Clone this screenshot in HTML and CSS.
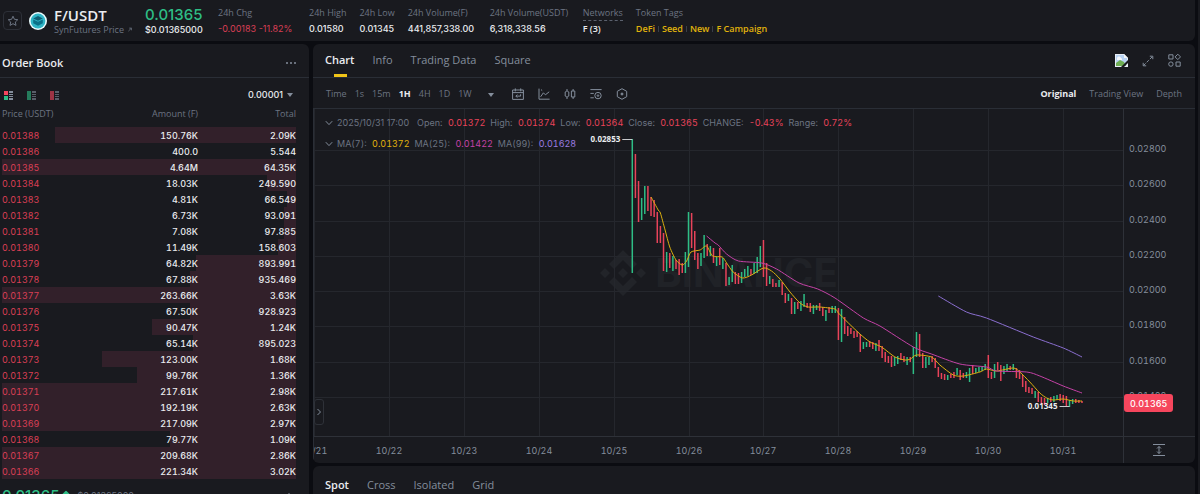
FILE: index.html
```html
<!DOCTYPE html>
<html lang="en">
<head>
    <meta charset="UTF-8">
    <meta name="viewport" content="width=device-width, initial-scale=1.0">
    <title>F/USDT | Spot</title>
    <link rel="stylesheet" href="styles.css">
</head>
<body>
    <div class="page">
        <div class="workspace">
            <header class="ticker">
                <button class="star" aria-label="Add to favorites">
                    <svg viewBox="0 0 12 12" width="12" height="12"><path d="M6 1.2l1.4 3.1 3.4.4-2.5 2.3.7 3.4L6 8.7l-3 1.7.7-3.4L1.2 4.7l3.4-.4z"/></svg>
                </button>
                <svg class="coin" viewBox="0 0 18 18" width="18" height="18">
                    <circle cx="9" cy="9" r="9" fill="#e9fbfd"/>
                    <circle cx="9" cy="9" r="7.4" fill="#2fb5c6"/>
                    <path d="M9 4l4.8 2.4L9 8.8 4.2 6.4z" fill="#0d5f74"/>
                    <path d="M4.2 7.4L9 9.8l4.8-2.4v3.8L9 13.8l-4.8-2.6z" fill="#0a7188"/>
                </svg>
                <div class="pair">
                    <h1>F/USDT</h1>
                    <a href="#">SynFutures Price <svg viewBox="0 0 5 5" width="5" height="5"><path d="M.5 4.5l3.6-3.6M1.5.8h2.7v2.7"/></svg></a>
                </div>
                <div class="last">
                    <div class="last-price num">0.01365</div>
                    <div class="value num">$0.01365000</div>
                </div>
                <div class="stat change"><div class="label">24h Chg</div><div class="value num down">-0.00183 -11.82%</div></div>
                <div class="stat"><div class="label">24h High</div><div class="value num">0.01580</div></div>
                <div class="stat"><div class="label">24h Low</div><div class="value num">0.01345</div></div>
                <div class="stat volume"><div class="label">24h Volume(F)</div><div class="value num">441,857,338.00</div></div>
                <div class="stat volume-quote"><div class="label">24h Volume(USDT)</div><div class="value num">6,318,338.56</div></div>
                <div class="stat"><div class="label"><span class="dashed">Networks</span></div><div class="value">F (3)</div></div>
                <div class="stat">
                    <div class="label">Token Tags</div>
                    <div class="value tags"><a href="#">DeFi</a><a href="#">Seed</a><a href="#">New</a><a href="#">F Campaign</a></div>
                </div>
            </header>

            <main class="panels">
                <section class="order-book">
                    <div class="panel-head">
                        <h2>Order Book</h2>
                        <button class="more" aria-label="More"><i></i><i></i><i></i></button>
                    </div>
                    <div class="book-tools">
                        <button aria-label="Order book">
                            <svg viewBox="0 0 10 9" width="10" height="9"><path fill="#f6465d" d="M0 0h4v4H0z"/><path fill="#2ebd85" d="M0 5h4v4H0z"/><path fill="#848e9c" d="M5 0h4v2H5zM5 3h4v1H5zM5 5h4v1H5zM5 7h4v2H5z"/></svg>
                        </button>
                        <button class="dim" aria-label="Buy order">
                            <svg viewBox="0 0 10 9" width="10" height="9"><path fill="#2ebd85" d="M0 0h4v9H0z"/><path fill="#848e9c" d="M5 0h4v2H5zM5 3h4v1H5zM5 5h4v1H5zM5 7h4v2H5z"/></svg>
                        </button>
                        <button class="dim" aria-label="Sell order">
                            <svg viewBox="0 0 10 9" width="10" height="9"><path fill="#f6465d" d="M0 0h4v9H0z"/><path fill="#848e9c" d="M5 0h4v2H5zM5 3h4v1H5zM5 5h4v1H5zM5 7h4v2H5z"/></svg>
                        </button>
                        <button class="tick-size num">0.00001<span class="caret"></span></button>
                    </div>
                    <table>
                        <thead>
                            <tr><th>Price (USDT)</th><th>Amount (F)</th><th>Total</th></tr>
                        </thead>
                        <tbody id="asks" class="num tabular"></tbody>
                    </table>
                    <div class="book-last">
                        <span class="book-price num">0.01365<svg viewBox="0 0 10 12" width="10" height="12"><path d="M5 11V1.5M1.5 5L5 1.5 8.500 5"/></svg></span>
                        <span class="book-mark num">$0.01365000</span>
                        <svg class="chev" viewBox="0 0 6 8" width="6" height="8"><path d="M1.500 1l3 3-3 3"/></svg>
                    </div>
                </section>

                <div class="right-side">
                    <section class="chart-panel">
                        <div class="tabs">
                            <button class="active">Chart</button>
                            <button>Info</button>
                            <button>Trading Data</button>
                            <button>Square</button>
                            <div class="tab-icons">
                                <svg viewBox="0 0 13 13" width="13" height="13">
                                    <path fill="#e8eef6" d="M0 0h9l4 4v9H0z"/>
                                    <path fill="#b9d3f3" d="M1 1h8v3h3v5H1z"/>
                                    <path fill="#f6f9fd" d="M2 5a2 2 0 0 1 4-1 1.500 1.500 0 0 1 1 2H2z"/>
                                    <path fill="#6fae54" d="M1 12V9l4-3 4 2 2 4z"/>
                                    <path fill="#f4f6f8" d="M9 0l4 4H9z"/>
                                    <path fill="#191a1f" d="M13 6v3l-4 4H6z"/>
                                    <path fill="#e8eef6" d="M13 10v3h-3z"/>
                                </svg>
                                <svg class="line" viewBox="0 0 12 12" width="12" height="12"><path stroke-dasharray="3 1.500" d="M1.500 10.500l9-9"/><path d="M7.800 1.200h3v3M1.200 7.800v3h3"/></svg>
                                <svg class="line" viewBox="0 0 13 13" width="13" height="13"><path d="M.8.8h4.200V5H.8zM9.800.2l2.700 2.700-2.700 2.700-2.700-2.700zM8 8h4.200v4.200H8z"/><circle cx="2.900" cy="10.100" r="2.200"/></svg>
                            </div>
                        </div>
                        <div class="toolbar">
                            <div class="intervals">
                                <button>Time</button>
                                <button>1s</button>
                                <button>15m</button>
                                <button class="active">1H</button>
                                <button>4H</button>
                                <button>1D</button>
                                <button>1W</button>
                                <button aria-label="More intervals"><span class="caret"></span></button>
                            </div>
                            <div class="tools">
                                <svg viewBox="0 0 12 12" width="12" height="12"><path d="M.6 2h10.800v9.400H.6zM.6 4.600h10.800M3.300.4v3M8.700.4v3M8.600 6.300v1.800H4M5.300 6.600L3.800 8.100l1.500 1.500"/></svg>
                                <svg viewBox="0 0 12 12" width="12" height="12"><path d="M1 .6v10.600h10.600M2.600 8.800l2.800-4 2 2 3.800-3M3 1.600l1.200 1"/></svg>
                                <svg viewBox="0 0 12 12" width="12" height="12"><path d="M1.200 4L3 2.800 4.800 4v4L3 9.200 1.200 8zM3 1v1.800M3 9.200V11M7.400 3h3.400v6H7.400zM9.100 1v2M9.100 9v2"/></svg>
                                <svg viewBox="0 0 12 12" width="12" height="12"><path d="M.4 1.600h11.200M.4 5.400h3.400M.4 9.800h3.400"/><circle cx="8" cy="7.600" r="3.200"/><circle cx="8" cy="7.600" r=".8"/></svg>
                                <svg viewBox="0 0 12 12" width="12" height="12"><path d="M6 .7l4.700 2.600v5.400L6 11.300 1.300 8.700V3.300z"/><circle cx="6" cy="6" r="1" fill="currentColor"/></svg>
                            </div>
                            <div class="views">
                                <button class="active">Original</button>
                                <button>Trading View</button>
                                <button>Depth</button>
                            </div>
                        </div>
                        <div class="chart">
                            <div class="watermark">
                                <svg viewBox="0 0 48 48" width="48" height="48"><path d="M24 1l14 14-5 5-9-9-9 9-5-5zM6 19l5 5-5 5-5-5zM24 19l5 5-5 5-5-5zM42 19l5 5-5 5-5-5zM24 47L10 33l5-5 9 9 9-9 5 5z"/></svg>
                                <span>BINANCE</span>
                            </div>
                            <svg id="chart-svg" class="chart-svg num tabular"></svg>
                            <div class="legend num tabular">
                                <div class="legend-row">
                                    <svg viewBox="0 0 8 6" width="8" height="6"><path d="M.8 1.200L4 4.600l3.200-3.400"/></svg>
                                    <span class="legend-time">2025/10/31 17:00</span>
                                    <span>Open: <b>0.01372</b></span>
                                    <span>High: <b>0.01374</b></span>
                                    <span>Low: <b>0.01364</b></span>
                                    <span>Close: <b>0.01365</b></span>
                                    <span>CHANGE: <b>-0.43%</b></span>
                                    <span>Range: <b>0.72%</b></span>
                                </div>
                                <div class="legend-row">
                                    <svg viewBox="0 0 8 6" width="8" height="6"><path d="M.8 1.200L4 4.600l3.200-3.400"/></svg>
                                    <span>MA(7): <b class="ma7">0.01372</b></span>
                                    <span>MA(25): <b class="ma25">0.01422</b></span>
                                    <span>MA(99): <b class="ma99">0.01628</b></span>
                                </div>
                            </div>
                            <button class="handle" aria-label="Show drawing tools"><svg viewBox="0 0 6 8" width="6" height="8"><path d="M1.500 1l3 3-3 3"/></svg></button>
                        </div>
                    </section>

                    <section class="trade-panel">
                        <div class="tabs">
                            <button class="active">Spot</button>
                            <button>Cross</button>
                            <button>Isolated</button>
                            <button>Grid</button>
                        </div>
                    </section>
                </div>
            </main>
        </div>
        <aside class="market-list"></aside>
    </div>

    <script src="chart.js"></script>
</body>
</html>
```

FILE: styles.css
```css
* {
    box-sizing: border-box;
}

body {
    margin: 0;
    height: 100vh;
    overflow: hidden;
    background-color: #0b0c11;
    color: #eaecef;
    font-family: "Open Sans", "Noto Sans", sans-serif;
    font-size: 9px;
    line-height: 16px;
}

button {
    padding: 0;
    border: none;
    background: none;
    color: inherit;
    font: inherit;
    cursor: pointer;
}

a {
    color: inherit;
    text-decoration: none;
}

h1, h2 {
    margin: 0;
}

svg {
    display: block;
    fill: none;
    stroke-linejoin: round;
}

.num {
    font-family: Inter, "Open Sans", sans-serif;
}

.tabular {
    font-variant-numeric: tabular-nums;
}

.page {
    display: grid;
    grid-template-columns: 1fr 2px;
    gap: 3px;
    height: 100%;
}

.workspace {
    min-width: 0;
}

.market-list {
    background-color: #191a1f;
}

/* Ticker */
.ticker {
    display: flex;
    align-items: center;
    gap: 13px;
    height: 41px;
    padding-left: 3px;
    white-space: nowrap;
    background-color: #191a1f;
    border-radius: 0 0 6px 0;
}

.star {
    display: grid;
    place-items: center;
    width: 19px;
    height: 19px;
    margin-right: -6px;
    border: 1px solid #2d3038;
    border-radius: 4px;
}

.star svg {
    stroke: #6c7482;
}

.coin {
    margin-right: -6px;
}

.pair {
    width: 78px;
}

.pair h1 {
    font-size: 15px;
    font-weight: 600;
    line-height: 18px;
}

.pair a {
    display: flex;
    align-items: center;
    gap: 4px;
    line-height: 12px;
    color: #6c7482;
}

.pair a svg {
    stroke: #6c7482;
}

.last {
    width: 60px;
}

.last .value {
    line-height: 12px;
}

.last-price {
    font-size: 15px;
    font-weight: 500;
    line-height: 18px;
    color: #2ebd85;
}

.label {
    color: #6c7482;
}

.value {
    font-weight: 600;
}

.num.value {
    font-weight: 500;
}

.change {
    min-width: 78px;
}

.volume {
    min-width: 69px;
}

.volume-quote {
    min-width: 80px;
}

.num.down {
    font-weight: 400;
    color: #d93f55;
}

.dashed {
    display: inline-block;
    line-height: 14px;
    border-bottom: 1px dashed #5b616e;
}

.stat .label,
.stat .value {
    height: 16px;
}

.tags {
    display: flex;
    color: #e0b30c;
}

.tags a + a::before {
    content: "";
    display: inline-block;
    width: 1px;
    height: 6px;
    margin: 0 3px;
    background-color: #3a3e47;
}

/* Panels */
.panels {
    display: grid;
    grid-template-columns: 309px 1fr;
    gap: 4px;
    padding-top: 3px;
}

.right-side {
    display: flex;
    flex-direction: column;
    gap: 3px;
    min-width: 0;
}

.order-book,
.chart-panel,
.trade-panel {
    background-color: #191a1f;
    border-radius: 6px;
    overflow: hidden;
}

.order-book {
    border-radius: 0 6px 0 0;
}

.panel-head {
    display: flex;
    align-items: center;
    justify-content: space-between;
    height: 34px;
    padding: 4px 13px 0 2px;
    border-bottom: 1px solid #2a2e36;
}

.panel-head h2 {
    font-size: 11px;
    font-weight: 600;
}

.more {
    display: flex;
    gap: 2px;
}

.more i {
    width: 2px;
    height: 2px;
    border-radius: 1px;
    background-color: #848e9c;
}

.book-tools {
    display: flex;
    align-items: center;
    gap: 13px;
    padding: 9px 16px 1px 4px;
}

.dim {
    opacity: 0.6;
}

.tick-size {
    display: flex;
    align-items: center;
    gap: 4px;
    margin-left: auto;
    font-weight: 500;
}

.caret {
    display: inline-block;
    border: 3px solid transparent;
    border-top: 4px solid #848e9c;
    border-bottom: none;
}

table {
    width: calc(100% - 15px);
    margin: 0 13px 0 2px;
    border-collapse: collapse;
    table-layout: fixed;
    text-align: right;
}

th {
    height: 23px;
    padding: 0 0 4px;
    font-weight: 400;
    color: #6c7482;
}

td {
    height: 16px;
    padding: 2px 0 0;
    line-height: 14px;
    font-weight: 500;
}

tbody tr {
    background: linear-gradient(to left, #32202a var(--depth), transparent var(--depth));
}

th:first-child,
td:first-child {
    text-align: left;
}

td:first-child {
    font-weight: 400;
    color: #d93f55;
}

.book-last {
    display: flex;
    align-items: center;
    gap: 6px;
    height: 34px;
    padding: 0 16px 0 2px;
    color: #6c7482;
}

.book-price {
    display: flex;
    align-items: center;
    gap: 2px;
    font-size: 15px;
    font-weight: 500;
    color: #2ebd85;
}

.book-price svg {
    stroke: #2ebd85;
    stroke-width: 1.5px;
}

.chev {
    margin-left: auto;
    stroke: #848e9c;
}

/* Chart panel */
.tabs {
    display: flex;
    gap: 18px;
    height: 34px;
    padding: 0 14px 0 12px;
    border-bottom: 1px solid #2a2e36;
    font-size: 11px;
    font-weight: 500;
    color: #848e9c;
}

.tabs .active {
    position: relative;
    font-weight: 600;
    color: #eaecef;
}

.chart-panel .tabs button {
    padding-bottom: 2px;
}

.chart-panel .tabs .active::after {
    content: "";
    position: absolute;
    left: calc(50% - 6px);
    bottom: 0;
    width: 13px;
    height: 3px;
    background-color: #f0c418;
}

.tab-icons {
    display: flex;
    align-items: center;
    gap: 14px;
    margin-left: auto;
}

.tab-icons .line {
    stroke: #848e9c;
}

.toolbar {
    display: flex;
    align-items: center;
    height: 31px;
    padding: 2px 13px 0;
    border-bottom: 1px solid #2a2e36;
    color: #6c7482;
}

.toolbar .active {
    font-weight: 700;
    color: #eaecef;
}

.intervals {
    display: flex;
    gap: 8px;
}

.intervals button:last-child {
    margin-left: 8px;
}

.tools {
    display: flex;
    gap: 14px;
    margin-left: 18px;
}

.tools svg {
    stroke: #848e9c;
}

.views {
    display: flex;
    gap: 13px;
    margin-left: auto;
}

.chart {
    position: relative;
    height: 354px;
    border-left: 1px solid #2a2e36;
}

.chart-svg {
    position: relative;
    width: 100%;
    height: 100%;
}

.watermark {
    position: absolute;
    inset: 0 72px 26px 0;
    display: flex;
    align-items: center;
    justify-content: center;
    gap: 8px;
    font-size: 40px;
    font-weight: 700;
    line-height: 48px;
    font-family: Inter, sans-serif;
    color: #202227;
}

.watermark svg {
    fill: #222429;
}

.grid-line {
    stroke: #25272d;
}

.axis-line {
    stroke: #2e3138;
}

.up {
    stroke: #2ebd85;
    stroke-width: 1.5px;
}

.fall {
    stroke: #e8435a;
    stroke-width: 1.5px;
}

.line-ma7 {
    stroke: #dcb010;
}

.line-ma25 {
    stroke: #c442a6;
}

.line-ma99 {
    stroke: #8b6fd0;
}

.axis-text {
    fill: #848e9c;
}

.callout {
    fill: #eaecef;
    font-family: "Open Sans", sans-serif;
    font-size: 8px;
    font-weight: 700;
}

.callout-line {
    stroke: #c8cacd;
}

.tag {
    fill: #f6465d;
}

.tag-text {
    fill: #fff;
    font-weight: 500;
}

.icon-line {
    stroke: #848e9c;
}

.legend {
    position: absolute;
    top: 6px;
    left: 11px;
    display: flex;
    flex-direction: column;
    gap: 5px;
    color: #6c7482;
    white-space: nowrap;
}

.legend-row {
    display: flex;
    align-items: center;
    gap: 5px;
}

.legend-row svg {
    margin-right: -1px;
    stroke: #848e9c;
}

.legend-time {
    font-variant-numeric: normal;
    margin-right: 3px;
}

.legend b {
    margin-left: 3px;
    font-weight: 400;
    color: #e8435a;
}

.legend .ma7 {
    color: #e0b30c;
}

.legend .ma25 {
    color: #c442a6;
}

.legend .ma99 {
    color: #9a7be0;
}

.handle {
    position: absolute;
    left: 0;
    bottom: 38px;
    display: grid;
    place-items: center;
    width: 10px;
    height: 26px;
    border: 1px solid #2e3138;
    border-radius: 3px;
    background-color: #191a1f;
}

.handle svg {
    stroke: #848e9c;
}

.trade-panel .tabs {
    height: 38px;
}
```

FILE: chart.js
```js
// price, amount, total, depth of the bar in percent
const asks = [
    ['0.01388', '150.76K', '2.09K', 82],
    ['0.01386', '400.0', '5.544', 0],
    ['0.01385', '4.64M', '64.35K', 100],
    ['0.01384', '18.03K', '249.590', 10],
    ['0.01383', '4.81K', '66.549', 3],
    ['0.01382', '6.73K', '93.091', 4],
    ['0.01381', '7.08K', '97.885', 4],
    ['0.01380', '11.49K', '158.603', 6],
    ['0.01379', '64.82K', '893.991', 34],
    ['0.01378', '67.88K', '935.469', 36],
    ['0.01377', '263.66K', '3.63K', 100],
    ['0.01376', '67.50K', '928.923', 36],
    ['0.01375', '90.47K', '1.24K', 49],
    ['0.01374', '65.14K', '895.023', 35],
    ['0.01373', '123.00K', '1.68K', 66],
    ['0.01372', '99.76K', '1.36K', 54],
    ['0.01371', '217.61K', '2.98K', 100],
    ['0.01370', '192.19K', '2.63K', 100],
    ['0.01369', '217.09K', '2.97K', 100],
    ['0.01368', '79.77K', '1.09K', 43],
    ['0.01367', '209.68K', '2.86K', 100],
    ['0.01366', '221.34K', '3.02K', 100]
];

document.getElementById('asks').innerHTML = asks.map(([price, amount, total, depth]) =>
    `<tr style="--depth: ${depth}%"><td>${price}</td><td>${amount}</td><td>${total}</td></tr>`
).join('');

// direction, top and bottom of every hourly bar
const bars = `g30-164 r45-89 r72-113 g89-111 g77-105 r77-102 r88-107 r91-108 r103-134 r117-134
r124-162 g143-163 r144-159 g147-162 r151-160 r150-166 r154-164 g143-164 g103-158 r104-139
r122-151 r144-160 g144-157 g126-149 r135-147 g137-147 r139-154 g148-157 r139-156 g149-160
r154-177 g168-176 g156-173 r163-175 r164-175 g163-174 g160-168 g157-167 r160-166 g154-165
g148-164 g137-158 r131-168 r154-177 g167-175 r170-178 r174-178 g171-178 r173-186 r184-194
g185-192 r189-205 g193-205 r193-200 g192-202 g185-198 r194-199 r194-203 g196-205 g196-201
r194-202 r198-207 g201-212 r198-204 g197-204 g197-204 r199-231 g200-233 r208-225 r217-227
r219-225 r222-229 r222-228 r225-243 g233-240 g233-238 r232-238 r233-240 g234-242 r231-242
r237-249 r243-253 r247-254 r247-258 g248-257 g247-255 r244-251 r247-253 g248-256 r248-253
g238-265 g223-248 r225-248 r244-259 g248-259 g248-256 r247-253 r249-259 r258-268 r264-270
r265-271 g266-271 r265-269 r263-269 g259-266 r261-271 r264-269 g263-269 g259-273 r256-265
g259-264 g258-263 g257-262 g255-261 r246-269 r263-270 g255-269 r253-261 r256-272 g257-265
g255-262 r257-261 g255-261 r259-269 r261-270 r266-278 r272-283 r278-284 r279-285 g282-289
r283-293 r288-295 r289-296 g289-294 r288-293 g287-293 g286-291 r285-292 r286-294 r287-298
g291-298 g290-295 r290-294 r291-294 r292-294`.split(/\s+/);

// [bar index, y]
const averages = {
    ma7: [[6, 88], [8.3, 101], [9, 104], [10.5, 121], [12, 138], [14, 151], [16, 156], [17.4, 152], [18.8, 143],
        [21.7, 141], [23.8, 137], [25.7, 147], [28.8, 148], [30.2, 154], [32.3, 163], [35.3, 169], [38.2, 166],
        [42, 159], [44.6, 162], [47.3, 170], [50.5, 183], [53.7, 194], [56.3, 198], [60, 198], [64.9, 200],
        [66, 204], [69.2, 214], [72.9, 225], [76.1, 233], [79.8, 238], [84.1, 248], [87.3, 251], [89.1, 250],
        [91, 246], [95.8, 248], [98.5, 256], [102.8, 266], [106, 267], [111.3, 263], [113.4, 260], [116.7, 262],
        [122, 259], [124.1, 263], [127.3, 273], [130.5, 284], [132.7, 289], [134.8, 291], [138, 290], [141.2, 292], [144, 292]],
    ma25: [[23.8, 127], [26.5, 134], [27.5, 136], [30.2, 145], [34, 152], [41.4, 154], [46.2, 160], [53.4, 174],
        [59.4, 180], [64.9, 189], [74, 209], [79.3, 217], [90, 238], [95.8, 245], [104.9, 255], [113.4, 258],
        [116.7, 262], [126.3, 263], [130.5, 267], [138, 277], [144, 284]],
    ma99: [[98, 187], [107, 203], [113.4, 209], [128.4, 228], [138, 239], [144, 248]]
};

const svg = document.getElementById('chart-svg');
const plotHeight = 328;
const axisWidth = 72;
const step = 3.123;

function priceY(price) {
    return 41 + (0.028 - price) * 17625;
}

// path that runs smoothly through all the points
function smoothPath(points) {
    let d = `M${points[0]}`;
    for (let i = 0; i < points.length - 1; i++) {
        const p0 = points[i - 1] || points[i];
        const p1 = points[i];
        const p2 = points[i + 1];
        const p3 = points[i + 2] || p2;
        d += `C${p1[0] + (p2[0] - p0[0]) / 8},${p1[1] + (p2[1] - p0[1]) / 8}`;
        d += ` ${p2[0] - (p3[0] - p1[0]) / 8},${p2[1] - (p3[1] - p1[1]) / 8} ${p2}`;
    }
    return d;
}

function draw() {
    const width = svg.clientWidth;
    const plotRight = width - axisWidth;
    // the last bar stays 41px away from the price axis
    const barX = i => plotRight - 41 - (144 - i) * step;
    let out = '';

    for (let price = 0.028; price > 0.0139; price -= 0.002) {
        const y = Math.round(priceY(price)) + 0.5;
        out += `<path class="grid-line" d="M0 ${y}H${plotRight}"/>`;
        out += `<text class="axis-text" x="${plotRight + 6}" y="${y + 1}">${price.toFixed(5)}</text>`;
    }

    for (let day = 31; day > 0; day--) {
        const x = Math.round(barX(138 - (31 - day) * 24));
        if (x < -20) break;
        out += `<path class="grid-line" d="M${x + 0.5} 0V${plotHeight}"/>`;
        out += `<text class="axis-text" x="${x}" y="345" text-anchor="middle">10/${day}</text>`;
    }

    out += `<path class="axis-line" d="M0 ${plotHeight - 0.5}H${width}M${plotRight + 0.5} 0V354"/>`;

    bars.forEach((bar, i) => {
        const [top, bottom] = bar.slice(1).split('-');
        out += `<path class="${bar[0] === 'g' ? 'up' : 'fall'}" d="M${barX(i)} ${top}V${bottom}"/>`;
    });

    for (const name in averages) {
        const points = averages[name].map(([i, y]) => [barX(i), y]);
        out += `<path class="line-${name}" d="${smoothPath(points)}"/>`;
    }

    const high = barX(0);
    const low = barX(140);
    out += `<path class="callout-line" d="M${high - 10} 30.5H${high}M${low - 10} 297.500H${low}"/>`;
    out += `<text class="callout" x="${high - 12}" y="33" text-anchor="end">0.02853</text>`;
    out += `<text class="callout" x="${low - 12}" y="300" text-anchor="end">0.01345</text>`;

    const y = Math.round(priceY(0.01365));
    out += `<rect class="tag" x="${plotRight + 1}" y="${y - 9}" width="49" height="18" rx="3"/>`;
    out += `<text class="tag-text" x="${plotRight + 7}" y="${y + 4}">0.01365</text>`;

    const cx = width - axisWidth / 2;
    out += `<path class="icon-line" d="M${cx - 6} 335.500h12M${cx - 6} 346.500h12M${cx} 337.500v7M${cx - 2} 339.500l2-2 2 2M${cx - 2} 342.500l2 2 2-2"/>`;

    svg.innerHTML = out;
}

window.addEventListener('resize', draw);
draw();
```
